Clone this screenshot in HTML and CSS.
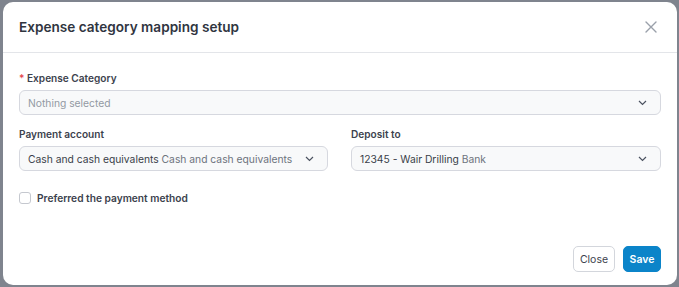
FILE: index.html
```html
<!DOCTYPE html>
<html>
<head>
<meta charset="utf-8">
<link rel="stylesheet" href="styles.css">
</head>
<body>
<div class="backdrop">
  <div class="modal">
    <div class="modal-header">
      <h1 class="modal-title">Expense category mapping setup</h1>
      <button class="close-x" aria-label="Close">
        <svg width="12" height="12" viewBox="0 0 12 12"><path d="M1 1L11 11M11 1L1 11" stroke="#9aa0aa" stroke-width="1.4" stroke-linecap="round"/></svg>
      </button>
    </div>
    <div class="modal-body">
      <div class="field">
        <label class="label"><span class="req">*</span> Expense Category</label>
        <div class="select">
          <span class="placeholder">Nothing selected</span>
          <svg class="chev" width="9" height="6" viewBox="0 0 9 6"><path d="M1 1L4.5 4.5L8 1" fill="none" stroke="#4b5260" stroke-width="1.2"/></svg>
        </div>
      </div>
      <div class="row">
        <div class="field">
          <label class="label">Payment account</label>
          <div class="select">
            <span class="value">Cash and cash equivalents <span class="sub">Cash and cash equivalents</span></span>
            <svg class="chev" width="9" height="6" viewBox="0 0 9 6"><path d="M1 1L4.5 4.5L8 1" fill="none" stroke="#4b5260" stroke-width="1.2"/></svg>
          </div>
        </div>
        <div class="field">
          <label class="label">Deposit to</label>
          <div class="select">
            <span class="value">12345 - Wair Drilling <span class="sub">Bank</span></span>
            <svg class="chev" width="9" height="6" viewBox="0 0 9 6"><path d="M1 1L4.5 4.5L8 1" fill="none" stroke="#4b5260" stroke-width="1.2"/></svg>
          </div>
        </div>
      </div>
      <label class="check">
        <span class="box"></span>
        <span class="check-label">Preferred the payment method</span>
      </label>
    </div>
    <div class="modal-footer">
      <button class="btn btn-light">Close</button>
      <button class="btn btn-primary">Save</button>
    </div>
  </div>
</div>
</body>
</html>
```
FILE: styles.css
```css
* { box-sizing: border-box; }
html, body { margin: 0; padding: 0; }
body {
  width: 679px;
  height: 287px;
  background: #7f848e;
  font-family: Inter, "Noto Sans", sans-serif;
  overflow: hidden;
}
.backdrop {
  padding: 2px 2px 2px 3px;
  height: 287px;
}
.modal {
  background: #fff;
  border-radius: 10px;
  width: 674px;
  height: 283px;
  display: flex;
  flex-direction: column;
}
.modal-header {
  height: 51px;
  border-bottom: 1px solid #e3e5e9;
  display: flex;
  align-items: center;
  justify-content: space-between;
  padding: 0 20px 0 16px;
}
.modal-title {
  margin: 0;
  font-size: 13.6px;
  font-weight: 600;
  color: #30353f;
}
.close-x {
  border: 0;
  background: none;
  padding: 0;
  width: 12px;
  height: 12px;
  display: flex;
}
.modal-body {
  padding: 18px 16px 0 16px;
  flex: 1;
}
.field { display: flex; flex-direction: column; }
.label {
  font-size: 10.1px;
  font-weight: 600;
  color: #3c424d;
  line-height: 14px;
  margin-bottom: 5px;
}
.req { color: #e5484d; }
.select {
  height: 25px;
  border: 1px solid #d6d8df;
  border-radius: 6px;
  background: #f8f9fa;
  display: flex;
  align-items: center;
  justify-content: space-between;
  padding: 0 13px 0 8px;
  font-size: 10.3px;
  white-space: nowrap;
}
.placeholder { color: #9399a3; }
.value { color: #3a3f49; }
.sub { color: #6d737d; }
.chev { flex: none; }
.row {
  display: grid;
  grid-template-columns: 309px 310px;
  column-gap: 23px;
  margin-top: 12px;
}
.check {
  display: flex;
  align-items: center;
  gap: 6px;
  margin-top: 21px;
}
.box {
  width: 12px;
  height: 12px;
  border: 1px solid #c5c8cf;
  border-radius: 3px;
  background: #fff;
}
.check-label {
  font-size: 10.2px;
  font-weight: 600;
  color: #3c424d;
}
.modal-footer {
  display: flex;
  justify-content: flex-end;
  gap: 8px;
  padding: 0 16px 13px 16px;
}
.btn {
  height: 26px;
  border-radius: 5px;
  font-family: Inter, "Noto Sans", sans-serif;
  font-size: 10.5px;
  padding: 0;
  cursor: pointer;
}
.btn-light {
  background: #fff;
  border: 1px solid #d3d6dc;
  color: #3c424d;
  width: 42px;
}
.btn-primary {
  background: #0b84c9;
  border: 1px solid #0b84c9;
  color: #fff;
  font-weight: 600;
  width: 38px;
}
```
